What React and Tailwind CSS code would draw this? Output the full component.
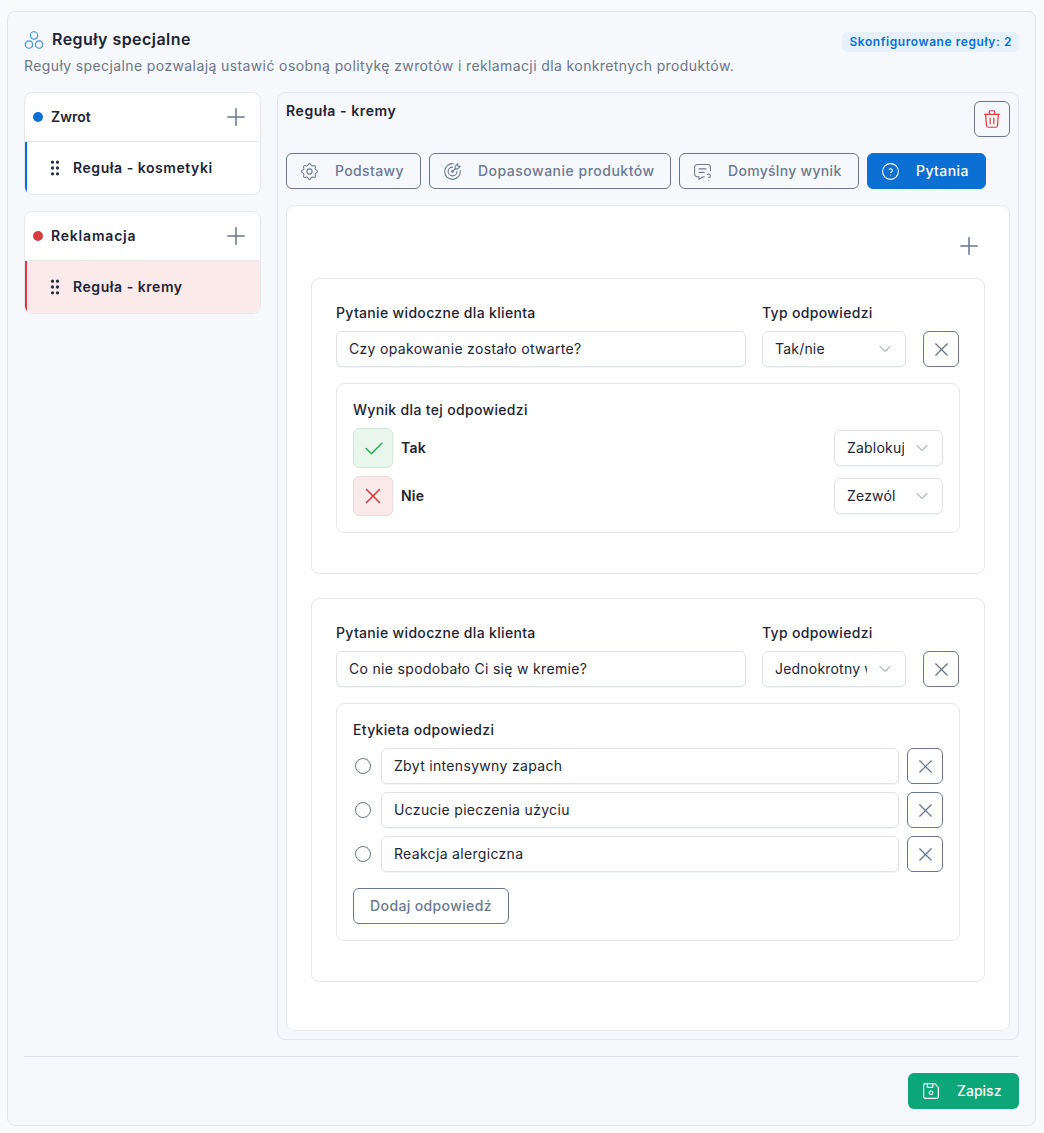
import {
  TbCheck,
  TbChevronDown,
  TbCircles,
  TbDeviceFloppy,
  TbGripVertical,
  TbHelpCircle,
  TbMessageQuestion,
  TbPlus,
  TbSettings,
  TbTargetArrow,
  TbTrash,
  TbX,
} from 'react-icons/tb';

const tabs = [
  { label: 'Podstawy', icon: TbSettings, width: 'w-[135px]', tracking: 'tracking-[0.35px]' },
  { label: 'Dopasowanie produktów', icon: TbTargetArrow, width: 'w-[242px]', tracking: 'tracking-[0.5px]' },
  { label: 'Domyślny wynik', icon: TbMessageQuestion, width: 'w-[180px]', tracking: 'tracking-[0.3px]' },
  { label: 'Pytania', icon: TbHelpCircle, width: 'w-[119px]', tracking: 'tracking-[0.4px]', active: true },
];

export default function App() {
  return (
    <div className="min-h-[1133px] bg-[#f9fafc] pb-2 pl-[7px] pr-2 pt-[11px] font-['Inter',sans-serif] text-[14px] text-[#1d2433]">
      <div className="h-[1115px] rounded-lg border border-[#e1e5ec] bg-[#f6f8fc] px-4 pt-4">
        <div className="flex h-[25px] items-start justify-between">
          <div className="-ml-px flex items-center gap-[7px] pt-[1px]">
            <TbCircles size={22} strokeWidth={1.3} className="text-[#3f93e6]" />
            <h2 className="-mt-[2px] text-[16px] font-semibold leading-6 tracking-[0.45px]">Reguły specjalne</h2>
          </div>
          <span className="mt-[4px] rounded-md bg-[#e6f1fb] px-[7px] py-[1px] text-[12px] font-semibold leading-[18px] tracking-[0.57px] text-[#0b6fd4]">
            Skonfigurowane reguły: 2
          </span>
        </div>
        <p className="mt-[2px] text-[14px] leading-[21px] tracking-[0.39px] text-[#6b7689]">
          Reguły specjalne pozwalają ustawić osobną politykę zwrotów i reklamacji dla konkretnych produktów.
        </p>

        <div className="mt-[16px] flex gap-4">
          <aside className="flex w-[237px] shrink-0 flex-col gap-4">
            <RuleGroup title="Zwrot" dot="bg-[#0b6fd4]" bar="border-l-[#0b6fd4]" rule="Reguła - kosmetyki" tracking="tracking-[0px]" />
            <RuleGroup title="Reklamacja" dot="bg-[#d63b3f]" bar="border-l-[#d63b3f]" rule="Reguła - kremy" tracking="tracking-[0.8px]" active />
          </aside>

          <section className="h-[948px] w-[742px] rounded-lg border border-[#e1e5ec] bg-[#f6f8fc] px-2 pt-2">
            <div className="flex items-start justify-between">
              <h3 className="-mt-[1px] text-[14px] font-semibold leading-[21px] tracking-[0.6px]">Reguła - kremy</h3>
              <button type="button" className="flex size-9 items-center justify-center rounded-md border border-[#677791] bg-transparent">
                <TbTrash size={22} strokeWidth={1.3} className="text-[#dc3b40]" />
              </button>
            </div>

            <div className="mt-4 flex gap-2">
              {tabs.map((tab) => (
                <Tab key={tab.label} {...tab} />
              ))}
            </div>

            <div className="mt-4 h-[826px] rounded-lg border border-[#e5e8ee] bg-white px-6">
              <div className="flex h-[72px] items-center justify-end pr-[2px] pt-[8px]">
                <TbPlus size={28} strokeWidth={1.3} className="text-[#67758c]" />
              </div>

              <div className="flex flex-col gap-6">
                <QuestionCard question="Czy opakowanie zostało otwarte?" type="Tak/nie" className="h-[296px]">
                  <div className="mt-4 h-[150px] rounded-lg border border-[#e5e8ee] px-4 pt-4">
                    <Label>Wynik dla tej odpowiedzi</Label>
                    <div className="mt-2 flex flex-col gap-2">
                      <ResultRow name="Tak" result="Zablokuj" yes />
                      <ResultRow name="Nie" result="Zezwól" />
                    </div>
                  </div>
                </QuestionCard>

                <QuestionCard question="Co nie spodobało Ci się w kremie?" type="Jednokrotny wybór" className="h-[384px]">
                  <div className="mt-4 h-[238px] rounded-lg border border-[#e5e8ee] px-4 pt-4">
                    <Label>Etykieta odpowiedzi</Label>
                    <div className="mt-2 flex flex-col gap-2">
                      <AnswerRow text="Zbyt intensywny zapach" />
                      <AnswerRow text="Uczucie pieczenia użyciu" />
                      <AnswerRow text="Reakcja alergiczna" />
                    </div>
                    <button
                      type="button"
                      className="mt-4 h-9 w-[156px] rounded-md border border-[#677791] pb-[2px] text-[14px] font-medium tracking-[0.37px] text-[#6b7a92]"
                    >
                      Dodaj odpowiedź
                    </button>
                  </div>
                </QuestionCard>
              </div>
            </div>
          </section>
        </div>

        <div className="mt-4 border-t border-[#dfe3ea] pt-4">
          <div className="flex justify-end">
            <button
              type="button"
              className="flex h-9 w-[111px] items-center gap-[15px] rounded-md bg-[#0ca678] pl-3 text-[14px] font-medium text-white"
            >
              <TbDeviceFloppy size={22} strokeWidth={1.25} />
              <span className="-mt-[2px]">Zapisz</span>
            </button>
          </div>
        </div>
      </div>
    </div>
  );
}

function RuleGroup({ title, dot, bar, rule, tracking, active }) {
  return (
    <div className="overflow-hidden rounded-lg border border-[#e5e8ee] bg-white">
      <div className="flex h-[49px] items-center justify-between border-b border-[#e5e8ee] pl-2 pr-[10px]">
        <div className="flex items-center gap-2">
          <span className={`size-[10px] rounded-full ${dot}`} />
          <span className={`-mt-[2px] font-semibold ${tracking}`}>{title}</span>
        </div>
        <TbPlus size={28} strokeWidth={1.3} className="text-[#67758c]" />
      </div>
      <div className={`flex h-[52px] items-center gap-[8px] border-l-2 pl-[18px] ${bar} ${active ? 'bg-[#fbeaea]' : ''}`}>
        <TbGripVertical size={20} strokeWidth={2} className="text-[#2a3242]" />
        <span className="-mt-[2px] font-semibold tracking-[0.55px]">{rule}</span>
      </div>
    </div>
  );
}

function Tab({ label, icon: Icon, width, tracking, active }) {
  return (
    <button
      type="button"
      className={`flex h-9 items-center gap-[15px] rounded-md border pl-3 text-[14px] font-medium ${width} ${tracking} ${
        active ? 'border-[#0b6fd4] bg-[#0b6fd4] text-white' : 'border-[#677791] text-[#6b7a92]'
      }`}
    >
      <Icon size={21} strokeWidth={1.2} />
      <span className="-mt-[2px]">{label}</span>
    </button>
  );
}

function QuestionCard({ question, type, className, children }) {
  return (
    <div className={`rounded-lg border border-[#e5e8ee] px-6 pt-6 ${className}`}>
      <div className="flex items-end">
        <div className="w-[410px]">
          <Label>Pytanie widoczne dla klienta</Label>
          <Field className="mt-2">{question}</Field>
        </div>
        <div className="ml-4 w-[144px]">
          <Label>Typ odpowiedzi</Label>
          <Select className="mt-2">{type}</Select>
        </div>
        <IconButton className="ml-[17px]" />
      </div>
      {children}
    </div>
  );
}

function Label({ children }) {
  return <div className="-mt-px text-[14px] font-medium leading-[21px] tracking-[0.33px]">{children}</div>;
}

function Field({ children, className = '' }) {
  return (
    <div className={`flex h-9 items-center rounded-md border border-[#dfe3ea] bg-white px-3 tracking-[0.32px] shadow-[0_1px_1px_rgba(20,30,50,0.05)] ${className}`}>
      <span className="-mt-[2px]">{children}</span>
    </div>
  );
}

function Select({ children, className = '' }) {
  return (
    <div className={`flex h-9 items-center rounded-md border border-[#dfe3ea] bg-white pl-3 pr-[10px] tracking-[0.2px] shadow-[0_1px_1px_rgba(20,30,50,0.05)] ${className}`}>
      <span className="-mt-[2px] min-w-0 flex-1 overflow-hidden whitespace-nowrap">{children}</span>
      <TbChevronDown size={20} strokeWidth={1.2} className="ml-2 shrink-0 text-[#7a869a]" />
    </div>
  );
}

function IconButton({ className = '' }) {
  return (
    <button type="button" className={`flex size-9 shrink-0 items-center justify-center rounded-md border border-[#677791] ${className}`}>
      <TbX size={23} strokeWidth={1.2} className="text-[#67758c]" />
    </button>
  );
}

function ResultRow({ name, result, yes }) {
  return (
    <div className="flex h-10 items-center">
      <div
        className={`flex size-10 items-center justify-center rounded-md border ${
          yes ? 'border-[#d3e7da] bg-[#e8f6ec] text-[#2fb350]' : 'border-[#efd9dc] bg-[#fbeaea] text-[#d63b3f]'
        }`}
      >
        {yes ? <TbCheck size={25} strokeWidth={1.5} /> : <TbX size={26} strokeWidth={1.5} />}
      </div>
      <span className="-mt-[2px] ml-2 flex-1 font-semibold tracking-[0.2px]">{name}</span>
      <Select className="w-[109px]">{result}</Select>
    </div>
  );
}

function AnswerRow({ text }) {
  return (
    <div className="flex items-center">
      <span className="ml-[2px] size-4 shrink-0 rounded-full border border-[#677791]" />
      <Field className="ml-[10px] flex-1">{text}</Field>
      <IconButton className="ml-2" />
    </div>
  );
}
